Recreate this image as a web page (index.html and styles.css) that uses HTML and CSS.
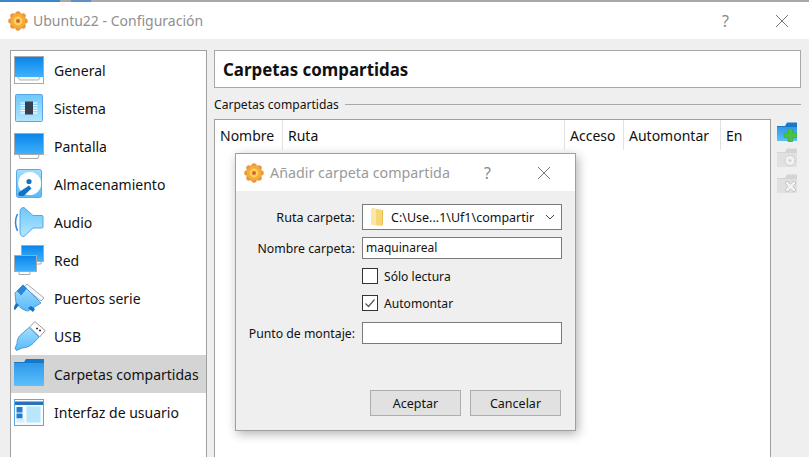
FILE: index.html
```html
<!DOCTYPE html>
<html lang="es">
<head>
    <meta charset="UTF-8">
    <title>Ubuntu22 - Configuración</title>
    <link rel="stylesheet" href="styles.css">
</head>
<body>
    <svg class="defs" width="0" height="0">
        <defs>
            <linearGradient id="blue" x1="0" y1="0" x2="0" y2="1">
                <stop offset="0" stop-color="#0a84ea"/>
                <stop offset="1" stop-color="#3fb2fb"/>
            </linearGradient>
            <linearGradient id="pale" x1="0" y1="0" x2="0" y2="1">
                <stop offset="0" stop-color="#6cc8fb"/>
                <stop offset="1" stop-color="#b4e6fe"/>
            </linearGradient>
            <linearGradient id="bright" x1="0" y1="0" x2="0" y2="1">
                <stop offset="0" stop-color="#a5defd"/>
                <stop offset="1" stop-color="#55bafa"/>
            </linearGradient>
            <linearGradient id="folder" x1="0" y1="0" x2="0" y2="1">
                <stop offset="0" stop-color="#2f98ea"/>
                <stop offset="1" stop-color="#5cc0fb"/>
            </linearGradient>
            <symbol id="cog" viewBox="0 0 20 20">
                <g fill="#ea9a3c">
                    <circle cx="10" cy="3" r="2.8"/><circle cx="10" cy="17" r="2.8"/>
                    <circle cx="3" cy="10" r="2.8"/><circle cx="17" cy="10" r="2.8"/>
                    <circle cx="5" cy="5" r="2.8"/><circle cx="15" cy="5" r="2.8"/>
                    <circle cx="5" cy="15" r="2.8"/><circle cx="15" cy="15" r="2.8"/>
                </g>
                <circle cx="10" cy="10" r="7" fill="#f7ad35"/>
                <circle cx="10" cy="10" r="4.4" fill="#fcd265"/>
                <circle cx="10" cy="10" r="2" fill="#d9622b"/>
            </symbol>
        </defs>
    </svg>

    <div class="window">
        <div class="top-strip"><span class="strip-a"></span><span class="strip-b"></span></div>
        <header class="titlebar">
            <svg class="app-icon" width="20" height="20"><use href="#cog"/></svg>
            <span class="title-text">Ubuntu22 - Configuración</span>
            <span class="title-help">?</span>
            <svg class="title-close" width="14" height="14" viewBox="0 0 14 14"><path d="M1 1l12 12M13 1L1 13" stroke="#777" fill="none"/></svg>
        </header>

        <div class="content">
            <nav class="side">
                <div class="side-item">
                    <svg width="32" height="30" viewBox="0 0 32 30"><rect x="0.5" y="1.5" width="29" height="27" fill="#fff" stroke="#a9a9a9"/><rect x="1" y="2" width="28" height="20" fill="url(#blue)"/><path d="M4 22l1.5 3h19l1.5-3" fill="#f2f2f2" stroke="#b5b5b5"/></svg>
                    <span>General</span>
                </div>
                <div class="side-item">
                    <svg width="32" height="30" viewBox="0 0 32 30"><rect x="1.5" y="1.5" width="27" height="27" rx="1" fill="url(#pale)" stroke="#5aa6e6"/><path d="M6.5 10h17M6.5 12.5h17M6.5 15h17M6.5 17.5h17M6.5 20h17" stroke="#fff"/><rect x="11" y="8.5" width="8" height="13" fill="#34404e"/></svg>
                    <span>Sistema</span>
                </div>
                <div class="side-item">
                    <svg width="32" height="30" viewBox="0 0 32 30"><rect x="0.5" y="2.5" width="29" height="21" fill="url(#blue)" stroke="#a9a9a9"/><path d="M5 24l1 3.5h18l1-3.5" fill="#fff" stroke="#a9a9a9"/></svg>
                    <span>Pantalla</span>
                </div>
                <div class="side-item">
                    <svg width="32" height="30" viewBox="0 0 32 30"><rect x="2.5" y="0.5" width="25" height="28" rx="2" fill="url(#bright)" stroke="#5aa6e6"/><circle cx="15.7" cy="14.5" r="11.5" fill="#fff"/><circle cx="15" cy="12.5" r="2.6" fill="#1272c4"/><path d="M5 27c-1-2-1-3 1-4.5l9-6 2.5 3-8 7.5z" fill="#1272c4"/></svg>
                    <span>Almacenamiento</span>
                </div>
                <div class="side-item">
                    <svg width="32" height="30" viewBox="0 0 32 30"><path d="M3.5 7Q-.5 15 3.5 24" stroke="#2f86d8" stroke-width="1.5" fill="none"/><path d="M6 5Q6 .5 10 .5L19 8.5H28Q29 8.5 29 9.5V20Q29 21 28 21H19L10 29.5Q6 29.5 6 25z" fill="url(#pale)" stroke="#5aa6e6"/></svg>
                    <span>Audio</span>
                </div>
                <div class="side-item">
                    <svg width="32" height="30" viewBox="0 0 32 30"><rect x="7.5" y="0.5" width="22" height="16" fill="url(#blue)" stroke="#a9a9a9"/><path d="M22 16.5h5v2.5h-5z" fill="#fff" stroke="#a9a9a9"/><rect x="0.5" y="10.5" width="22" height="16" fill="url(#blue)" stroke="#a9a9a9"/><path d="M5 26.5h11v3H5z" fill="#fff" stroke="#a9a9a9"/></svg>
                    <span>Red</span>
                </div>
                <div class="side-item">
                    <svg width="32" height="30" viewBox="0 0 32 30"><path d="M13 1l17 14-3 3L10 4z" fill="#f6f6f6" stroke="#a9a9a9"/><path d="M9 2l18 18-13 8c-4 0-10-5-12-8L1 10z" fill="url(#bright)" stroke="#4a9de2"/><path d="M3 8l6-6.5 4 4-6 7z" fill="#2a86d6"/><path d="M2 20l-3 6 2 1 4-5zM14 25l5 4 2-3-4-3z" fill="#1272c4"/></svg>
                    <span>Puertos serie</span>
                </div>
                <div class="side-item">
                    <svg width="32" height="30" viewBox="0 0 32 30"><path d="M20.7 .5l10.5 9-5.500 6.500-10-10z" fill="#fff" stroke="#9a9a9a"/><path d="M22 7.5h2M25 9.5h2" stroke="#333" stroke-width="1.5"/><path d="M15 6.5l10 9.5-6 6.500c-3 3-8 4.500-11 4.500l-5.500 2.500-1.500-2 2-5c0-3 1-6 3-8z" fill="url(#bright)" stroke="#4a9de2"/></svg>
                    <span>USB</span>
                </div>
                <div class="side-item side-selected">
                    <svg width="32" height="30" viewBox="0 0 32 30"><path d="M0 27V3h10l2-3h18v5H0z" fill="#1678cc"/><path d="M0 4h30v22a1 1 0 0 1-1 1H1a1 1 0 0 1-1-1z" fill="url(#folder)"/></svg>
                    <span>Carpetas compartidas</span>
                </div>
                <div class="side-item">
                    <svg width="32" height="30" viewBox="0 0 32 30"><rect x="0.5" y="2.5" width="29" height="26" fill="#f6fbff" stroke="#5aa6e6"/><rect x="1" y="4.5" width="28" height="3.5" fill="#2a72b8"/><rect x="2.5" y="10" width="6" height="5.5" fill="#1f7ed0"/><rect x="2.5" y="16.5" width="6" height="5" fill="#1f7ed0"/><rect x="2.5" y="21.5" width="8" height="4" fill="#d3effd"/><rect x="12.5" y="9.5" width="14" height="16" fill="#b8e6fc"/></svg>
                    <span>Interfaz de usuario</span>
                </div>
            </nav>

            <main class="panel">
                <h1 class="panel-title">Carpetas compartidas</h1>
                <div class="group-label"><span>Carpetas compartidas</span><i></i></div>
                <div class="folders">
                    <div class="table-box">
                        <div class="table-head">
                            <div class="col col-name">Nombre</div>
                            <div class="col col-path">Ruta</div>
                            <div class="col col-access">Acceso</div>
                            <div class="col col-auto">Automontar</div>
                            <div class="col col-en">En</div>
                        </div>
                    </div>
                    <div class="tools">
                        <svg width="20" height="20" viewBox="0 0 20 20"><path d="M0 19V4h8l2-3.5h10V19z" fill="#1a78c8"/><path d="M0 5h20v14H0z" fill="url(#folder)"/><path d="M11 7h4.5v4H20v4.5h-4.5V20H11v-4.5H7V11h4z" fill="#4bc33c" stroke="#35a02e" stroke-width=".5"/></svg>
                        <svg width="20" height="20" viewBox="0 0 20 20"><path d="M0 19V4h8l2-3.5h10V19z" fill="#d4d4d4"/><path d="M0 5h20v14H0z" fill="#e0e0e0"/><circle cx="13" cy="12.5" r="5" fill="#f2f2f2" stroke="#c4c4c4" stroke-dasharray="2 1"/><circle cx="13" cy="12.5" r="1.6" fill="#d4d4d4"/></svg>
                        <svg width="20" height="20" viewBox="0 0 20 20"><path d="M0 19V4h8l2-3.5h10V19z" fill="#d4d4d4"/><path d="M0 5h20v14H0z" fill="#e0e0e0"/><path d="M8 9l2-2 3.5 3 3.5-3 2 2-3 3.5 3 3.5-2 2-3.5-3-3.5 3-2-2 3-3.5z" fill="#f4f4f4" stroke="#c4c4c4"/></svg>
                    </div>
                </div>
            </main>
        </div>

        <section class="dialog">
            <header class="dialog-bar">
                <svg class="app-icon" width="20" height="20"><use href="#cog"/></svg>
                <span class="dialog-title">Añadir carpeta compartida</span>
                <span class="dialog-help">?</span>
                <svg class="dialog-close" width="14" height="14" viewBox="0 0 14 14"><path d="M1 1l12 12M13 1L1 13" stroke="#777" fill="none"/></svg>
            </header>
            <form class="dialog-form" onsubmit="return false;">
                <label class="row-label row-combo">Ruta carpeta:</label>
                <div class="combo">
                    <svg width="14" height="20" viewBox="0 0 14 20"><path d="M2 1l10 2v16l-10-1z" fill="#f7d679"/><path d="M1 2h5v16H1z" fill="#fbe7a6"/><path d="M12 3h1v15h-1z" fill="#e9bd4e"/></svg>
                    <span class="combo-text">C:\Use...1\Uf1\compartir</span>
                    <svg class="combo-arrow" width="10" height="6" viewBox="0 0 10 6"><path d="M1 1l4 4 4-4" stroke="#444" fill="none"/></svg>
                </div>
                <label class="row-label">Nombre carpeta:</label>
                <div class="field">maquinareal</div>
                <div class="check-row first-check"><span class="box"></span><span>Sólo lectura</span></div>
                <div class="check-row"><span class="box"><svg width="14" height="14" viewBox="0 0 14 14"><path d="M2.5 7.5l3 3 6-7" stroke="#555" stroke-width="1.2" fill="none"/></svg></span><span>Automontar</span></div>
                <label class="row-label">Punto de montaje:</label>
                <div class="field"></div>
            </form>
            <footer class="dialog-buttons">
                <button class="btn">Aceptar</button>
                <button class="btn">Cancelar</button>
            </footer>
        </section>
    </div>
</body>
</html>
```

FILE: styles.css
```css
/* Dialog look of the settings window */
html, body {
    margin: 0;
    height: 100%;
    overflow: hidden;
}
body {
    font-family: "Noto Sans", "Open Sans", Arial, sans-serif;
    font-size: 14px;
    color: #111;
    background-color: #efefef;
}
.defs {
    position: absolute;
}
.window {
    position: relative;
    height: 457px;
    overflow: hidden;
}
.top-strip {
    display: flex;
    height: 2px;
    background-color: #a8a8a8;
}
.strip-a {
    width: 60px;
    background-color: #3a86c8;
}
.strip-b {
    width: 20px;
    margin-left: 11px;
    background-color: #5d90c4;
}
.titlebar {
    display: flex;
    align-items: center;
    height: 37px;
    padding-left: 8px;
    background-color: #fff;
}
.app-icon {
    flex: none;
}
.title-text {
    margin-left: 5px;
    font-size: 14px;
    color: #8f8f8f;
}
.title-help {
    margin-left: auto;
    font-size: 16px;
    color: #8a8a8a;
}
.title-close {
    margin-left: 46px;
    margin-right: 20px;
}
.content {
    display: flex;
    gap: 7px;
    padding: 11px 8px 0 10px;
}
.side {
    flex: none;
    width: 195px;
    height: 420px;
    border: 1px solid #a0a0a0;
    background-color: #fff;
}
.side-item {
    display: flex;
    align-items: center;
    gap: 8px;
    height: 38px;
    padding-left: 3px;
}
.side-selected {
    background-color: #d4d4d4;
}
.panel {
    flex: 1;
    min-width: 0;
}
.panel-title {
    height: 36px;
    margin: 0;
    padding-left: 8px;
    border: 1px solid #a8a8a8;
    background-color: #fff;
    font-size: 16.9px;
    line-height: 38px;
}
.group-label {
    display: flex;
    align-items: center;
    gap: 6px;
    margin-top: 7px;
    height: 18px;
    font-size: 12.1px;
}
.group-label i {
    flex: 1;
    height: 1px;
    background-color: #a8a8a8;
}
.folders {
    display: flex;
    gap: 6px;
    margin-top: 6px;
}
.table-box {
    width: 555px;
    height: 340px;
    border: 1px solid #a0a0a0;
    background-color: #fff;
}
.table-head {
    display: flex;
    height: 30px;
}
.col {
    box-sizing: border-box;
    padding-left: 5px;
    border-right: 1px solid #e2e2e2;
    line-height: 31px;
}
.col-name {
    width: 68px;
}
.col-path {
    width: 282px;
}
.col-access {
    width: 59px;
}
.col-auto {
    width: 97px;
}
.col-en {
    width: 49px;
    border-right: none;
}
.tools {
    display: flex;
    flex-direction: column;
    gap: 6px;
    padding-top: 3px;
}
.dialog {
    position: absolute;
    left: 235px;
    top: 153px;
    width: 339px;
    height: 276px;
    border: 1px solid #a0a0a0;
    background-color: #efefef;
    box-shadow: 2px 3px 10px rgba(0, 0, 0, 0.3);
}
.dialog-bar {
    display: flex;
    align-items: center;
    height: 37px;
    padding-left: 8px;
    background-color: #fff;
}
.dialog-title {
    margin-left: 6px;
    font-size: 14.3px;
    color: #9a9a9a;
}
.dialog-help {
    margin-left: 34px;
    font-size: 16px;
    color: #8a8a8a;
}
.dialog-close {
    margin-left: 46px;
}
.dialog-form {
    display: grid;
    grid-template-columns: 119px 200px;
    column-gap: 7px;
    padding-top: 13px;
    font-size: 12.25px;
}
.row-label {
    display: flex;
    align-items: center;
    justify-content: flex-end;
    height: 22px;
    margin-bottom: 9px;
}
.row-combo {
    height: 26px;
    margin-bottom: 7px;
    font-size: 12.6px;
}
.combo {
    box-sizing: border-box;
    display: flex;
    align-items: center;
    height: 26px;
    margin-bottom: 7px;
    padding: 0 6px 0 7px;
    border: 1px solid #7a7a7a;
    background-color: #fff;
}
.combo-text {
    margin-left: 7px;
    font-size: 12.5px;
}
.combo-arrow {
    margin-left: auto;
}
.field {
    box-sizing: border-box;
    height: 22px;
    margin-bottom: 9px;
    padding-left: 3px;
    border: 1px solid #7a7a7a;
    background-color: #fff;
    font-size: 12px;
    line-height: 20px;
}
.check-row {
    grid-column: 2;
    display: flex;
    align-items: center;
    gap: 6px;
    height: 16px;
    margin-bottom: 11px;
    font-size: 12.1px;
}
.box {
    box-sizing: border-box;
    display: flex;
    width: 16px;
    height: 16px;
    border: 1px solid #333;
    background-color: #fff;
}
.dialog-buttons {
    display: flex;
    justify-content: flex-end;
    gap: 9px;
    margin-top: 37px;
    padding-right: 14px;
}
.btn {
    width: 91px;
    height: 26px;
    padding: 0;
    border: 1px solid #adadad;
    background-color: #e1e1e1;
    font: inherit;
    font-size: 12.5px;
    color: #111;
}
```
